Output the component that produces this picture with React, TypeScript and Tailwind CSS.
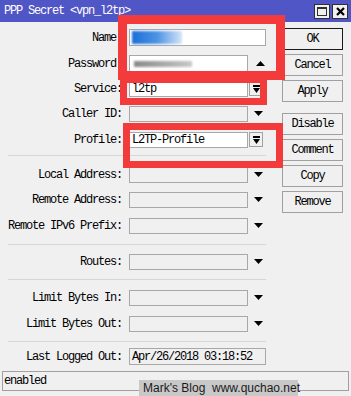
import React from "react";

const mono = { fontFamily: '"Liberation Mono", "DejaVu Sans Mono", monospace' };

function Down() {
  return (
    <svg width="9" height="5" viewBox="0 0 9 5" className="block">
      <polygon points="0,0 9,0 4.5,5" fill="#000" />
    </svg>
  );
}

function Up() {
  return (
    <svg width="9" height="5" viewBox="0 0 9 5" className="block">
      <polygon points="0,5 9,5 4.5,0" fill="#000" />
    </svg>
  );
}

function ComboBtn() {
  return (
    <div className="w-[14px] h-[15px] border border-[#a0a0a0] bg-[#f0f0f0] flex items-center justify-center ml-[1px]">
      <svg width="7" height="8" viewBox="0 0 7 8" className="block">
        <rect x="0" y="0" width="7" height="2" fill="#000" />
        <polygon points="0,3 7,3 3.5,8" fill="#000" />
      </svg>
    </div>
  );
}

function Row({ label, children, className }: { label: string; children?: React.ReactNode; className: string }) {
  return (
    <div className={"flex items-center h-[17px] " + className}>
      <div className="w-[122px] text-right whitespace-pre leading-none">{label}</div>
      <div className="ml-[7px] flex items-center">{children}</div>
    </div>
  );
}

function GrayField() {
  return (
    <>
      <div className="w-[119px] h-[16px] border border-[#a8a8a8] bg-[#f0f0f0]" />
      <div className="ml-[6px]">
        <Down />
      </div>
    </>
  );
}

function Btn({ children, className = "" }: { children: React.ReactNode; className?: string }) {
  return (
    <div
      className={
        "w-[61px] h-[22px] border bg-[#f0f0f0] flex items-center justify-center leading-none " + className
      }
    >
      {children}
    </div>
  );
}

export default function App() {
  return (
    <div
      className="relative w-[351px] h-[396px] bg-[#f0f0f0] text-black text-[12px] tracking-[-1.2px] overflow-hidden flex flex-col"
      style={mono}
    >
      {/* title bar */}
      <div className="h-[22px] bg-[#5156c6] flex items-center pl-[4px] text-white shrink-0">
        <span className="leading-none">PPP Secret &lt;vpn_l2tp&gt;</span>
        <div className="ml-auto flex gap-[2px] mr-[3px]">
          <div className="w-[16px] h-[15px] bg-[#f0f0f0] border border-[#303030] flex items-center justify-center">
            <div className="w-[10px] h-[9px] border border-[#303030] border-t-2" />
          </div>
          <div className="w-[16px] h-[15px] bg-[#f0f0f0] border border-[#303030] flex items-center justify-center">
            <svg width="9" height="9" viewBox="0 0 9 9" className="block">
              <path d="M1 1 L8 8 M8 1 L1 8" stroke="#000" strokeWidth="2.2" />
            </svg>
          </div>
        </div>
      </div>

      <div className="flex pt-[6px]">
        {/* left form */}
        <div className="w-[282px] pt-[1px] flex flex-col">
          <Row label="Name:" className="">
            <div className="w-[137px] h-[17px] border border-[#a8a8a8] bg-white flex items-center pl-[2px]">
              <div className="w-[50px] h-[13px] bg-linear-to-r from-[#1a6fd8] via-[#4b93e4] to-[#d4e4f6] blur-[1px]" />
            </div>
          </Row>
          <Row label="Password:" className="mt-[9px]">
            <div className="w-[119px] h-[17px] border border-[#a8a8a8] bg-white flex items-center pl-[4px]">
              <div className="w-[58px] h-[6px] bg-linear-to-r from-[#8a8a8a] to-[#c8c8c8] blur-[1px]" />
            </div>
            <div className="ml-[8px]">
              <Up />
            </div>
          </Row>
          <Row label="Service:" className="mt-[8px]">
            <div className="w-[119px] h-[16px] border border-[#a8a8a8] bg-white flex items-center pl-[2px] leading-none">
              l2tp
            </div>
            <ComboBtn />
          </Row>
          <Row label="Caller ID:" className="mt-[8px]">
            <GrayField />
          </Row>
          <Row label="Profile:" className="mt-[9px]">
            <div className="w-[119px] h-[16px] border border-[#a8a8a8] bg-white flex items-center pl-[2px] leading-none">
              L2TP-Profile
            </div>
            <ComboBtn />
          </Row>
          <div className="mt-[7px] ml-[8px] w-[258px] border-t border-[#d6d6d6]" />
          <Row label="Local Address:" className="mt-[10px]">
            <GrayField />
          </Row>
          <Row label="Remote Address:" className="mt-[8px]">
            <GrayField />
          </Row>
          <Row label="Remote IPv6 Prefix:" className="mt-[9px]">
            <GrayField />
          </Row>
          <div className="mt-[10px] ml-[8px] w-[258px] border-t border-[#d6d6d6]" />
          <Row label="Routes:" className="mt-[8px]">
            <GrayField />
          </Row>
          <div className="mt-[9px] ml-[8px] w-[258px] border-t border-[#d6d6d6]" />
          <Row label="Limit Bytes In:" className="mt-[9px]">
            <GrayField />
          </Row>
          <Row label="Limit Bytes Out:" className="mt-[9px]">
            <GrayField />
          </Row>
          <div className="mt-[9px] ml-[8px] w-[258px] border-t border-[#d6d6d6]" />
          <Row label="Last Logged Out:" className="mt-[6px]">
            <div className="w-[137px] h-[17px] border border-[#a8a8a8] bg-[#f0f0f0] flex items-center pl-[2px] leading-none">
              Apr/26/2018 03:18:52
            </div>
          </Row>
        </div>

        {/* right buttons */}
        <div className="flex flex-col gap-[4px]">
          <Btn className="border-[#1a1a1a]">OK</Btn>
          <Btn className="border-[#a0a0a0]">Cancel</Btn>
          <Btn className="border-[#a0a0a0]">Apply</Btn>
          <Btn className="border-[#a0a0a0] mt-[7px]">Disable</Btn>
          <Btn className="border-[#a0a0a0]">Comment</Btn>
          <Btn className="border-[#a0a0a0]">Copy</Btn>
          <Btn className="border-[#a0a0a0]">Remove</Btn>
        </div>
      </div>

      {/* status bar */}
      <div className="mt-[6px] mx-[2px] h-[20px] border border-[#a0a0a0] bg-[#f0f0f0] flex items-center pl-[1px] leading-none">
        enabled
      </div>

      {/* watermark */}
      <div
        className="absolute left-[139px] top-[380px] w-[159px] h-[16px] bg-[#c8c8c8] flex items-center pl-[4px] text-[12px] tracking-normal text-[#1a1a1a] leading-none whitespace-pre"
        style={{ fontFamily: '"Liberation Sans", Arial, sans-serif' }}
      >
        Mark's Blog  www.quchao.net
      </div>

      {/* red highlight boxes */}
      <div className="absolute left-[118px] top-[15px] w-[167px] h-[65px] border-[9px] border-[#f43b3b]" />
      <div className="absolute left-[120px] top-[76px] w-[147px] h-[29px] border-[7px] border-[#f43b3b]" />
      <div className="absolute left-[123px] top-[123px] w-[160px] h-[45px] border-[7px] border-[#f43b3b]" />
    </div>
  );
}
